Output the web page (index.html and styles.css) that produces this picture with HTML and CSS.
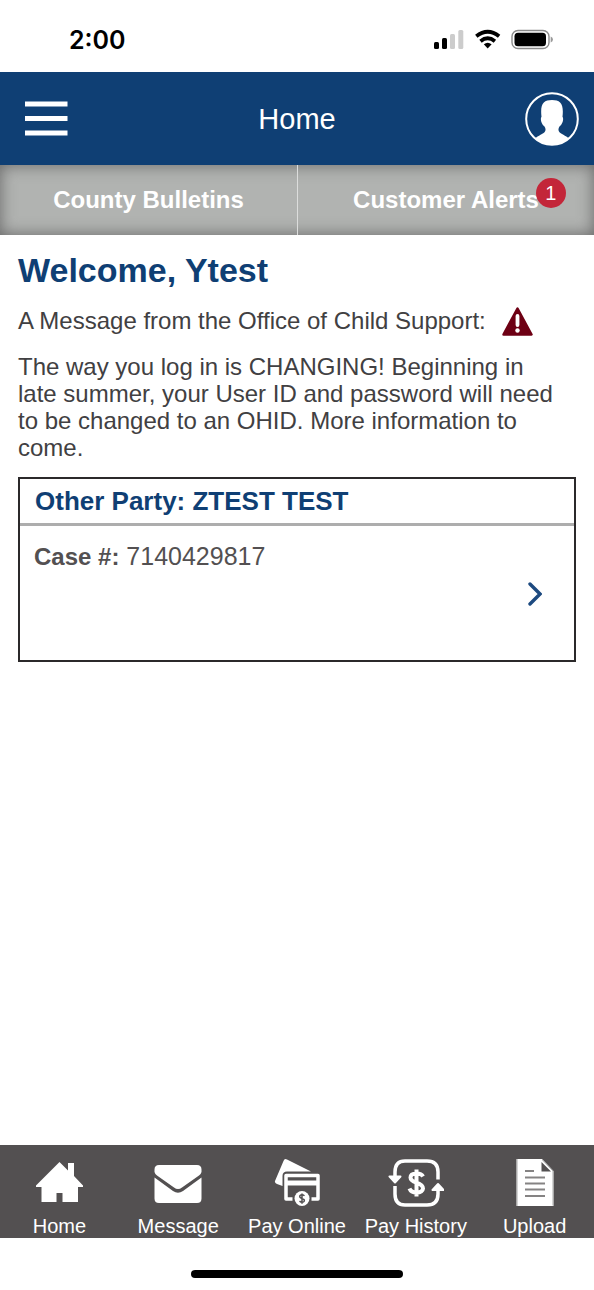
FILE: index.html
```html
<!DOCTYPE html>
<html lang="en">
<head>
<meta charset="utf-8">
<meta name="viewport" content="width=device-width, initial-scale=1">
<title>Home</title>
<link rel="stylesheet" href="styles.css">
</head>
<body>
<div class="status">
  <span class="clock">2:00</span>
  <svg class="status-icons" width="120" height="22" viewBox="0 0 120 22" aria-hidden="true">
    <g><rect x="1" y="13" width="5" height="7" rx="1.5"/><rect x="9" y="9" width="5" height="11" rx="1.5"/></g>
    <g fill="#ccc"><rect x="17" y="5" width="5" height="15" rx="1.5"/><rect x="25.300" y="1" width="5" height="19" rx="1.500"/></g>
    <g fill="none" stroke="#000" stroke-width="3.800"><path d="M43.300 7.300Q54.700-1.800 66.100 7.300"/><path d="M47.500 12.200Q54.700 6.300 61.900 12.200"/></g>
    <path d="M50.800 15.300Q54.700 12 58.600 15.300L54.700 19.500Z"/>
    <rect x="79" y="1.500" width="37" height="18" rx="6" fill="none" stroke="#8a8a8a" stroke-width="1.400"/>
    <rect x="81.500" y="3.800" width="31.500" height="13.500" rx="3.500"/>
    <path d="M117.700 7.600Q120 8.600 120 10.500T117.700 13.400Z" fill="#999"/>
  </svg>
</div>
<header class="header">
  <button class="icon-button" aria-label="Menu">
    <svg width="43" height="35" viewBox="0 0 43 35" fill="#fff"><path d="M0 .5h42.500v5H0zM0 15h42.500v5H0zM0 29.500h42.500v5H0z"/></svg>
  </button>
  <h1 class="title">Home</h1>
  <button class="icon-button" aria-label="Profile">
    <svg width="54" height="54" viewBox="0 0 54 54"><circle cx="27" cy="27" r="25.800" fill="none" stroke="#fff" stroke-width="2"/><path fill="#fff" d="M10 46.500C13 43.500 18.500 42 20 39.500 21 38 20.500 36 19.500 34.500 16.800 33 14.800 27 16.500 24.800 15 12 18.500 8 27 8S39 12 37.500 24.800C39.200 27 37.200 33 34.500 34.500 33.500 36 33 38 34 39.500 35.500 42 41 43.500 44 46.500A26 26 0 0 1 10 46.500Z"/></svg>
  </button>
</header>
<nav class="tabs" aria-label="Notices">
  <a class="tab" href="#bulletins">County Bulletins</a>
  <a class="tab" href="#alerts"><span class="tab-label">Customer Alerts<span class="badge">1</span></span></a>
</nav>
<main class="main">
  <h2 class="welcome">Welcome, Ytest</h2>
  <p class="notice">A Message from the Office of Child Support:
    <svg width="31" height="29" viewBox="0 0 31 29" aria-hidden="true"><path d="M15.500 1.500 29.500 27.500H1.500Z" fill="#6e0014" stroke="#6e0014" stroke-width="2.500" stroke-linejoin="round"/><path d="M15.500 9v9" stroke="#fff" stroke-width="3.800" stroke-linecap="round"/><circle cx="15.500" cy="23.500" r="2.200" fill="#fff"/></svg>
  </p>
  <p class="message">The way you log in is CHANGING! Beginning in late summer, your User ID and password will need to be changed to an OHID. More information to come.</p>
  <section class="case">
    <h3 class="case-title">Other Party: ZTEST TEST</h3>
    <div class="case-body">
      <p class="case-number"><strong class="case-label">Case #:</strong> 7140429817</p>
      <a class="case-link" href="#case" aria-label="Open case"><svg width="14" height="24" viewBox="0 0 14 24" fill="none" stroke="#1d4a80" stroke-width="3.400" stroke-linecap="round"><path d="M2 2 12 12 2 22"/></svg></a>
    </div>
  </section>
</main>
<nav class="bottom-nav" aria-label="Main">
  <a class="nav-item" href="#home">
    <svg width="56" height="48" viewBox="0 0 56 48" fill="#fff"><path d="M28.500 3 37 11.500V4H43V17L52 26.500V28H47V43H31.500V34H25.500V43H10.500V28H5V26.500Z"/></svg>Home</a>
  <a class="nav-item" href="#message">
    <svg width="56" height="48" viewBox="0 0 56 48" fill="#fff"><path d="M9 6H47Q51.500 6 51.500 10.500V13Q51 15 49 16.500L32 28.500Q28 31.500 24 28.500L7 16.500Q5 15 4.500 13V10.500Q4.500 6 9 6Z"/><path d="M4.500 18.500 23 32Q28 35.500 33 32L51.500 18.500V39.500Q51.500 44 47 44H9Q4.500 44 4.500 39.500Z"/></svg>Message</a>
  <a class="nav-item" href="#pay">
    <svg width="56" height="48" viewBox="0 0 56 48"><path d="M6 22 14.500 2Q15.500-1 18 .5L42 12.500H18Q13.500 12.500 13.500 17V27L8 25Q5.500 24 6 22Z" fill="#fff"/><path d="M23.500 40H17V16.500H49V40H42.500" fill="none" stroke="#fff" stroke-width="3.500" stroke-linejoin="round"/><path d="M17 21.500h32v5H17z" fill="#fff"/><circle cx="33" cy="39.500" r="7.500" fill="#fff"/><path d="M35.500 36.800Q33 34.700 31 36.500 30 38.500 33 39.500 36.300 40.500 35 42.500 33 44.200 30.500 42.200M33 34.500V44.800" fill="none" stroke="#535051" stroke-width="1.500"/></svg>Pay Online</a>
  <a class="nav-item" href="#history">
    <svg width="56" height="48" viewBox="0 0 56 48" fill="none" stroke="#fff" stroke-width="3.500"><path d="M7 20V13Q7 2 17 2H39Q50 2 50 13V20.500M7 27V35Q7 46 17 46H39Q50 46 50 35V29"/><path d="M35 17.500Q33.500 14.500 28.500 14.500 22.500 14.500 22.500 18.500 22.500 21.500 28.500 23.700 35 26 35 29.500 34.500 33.500 28.500 33.500 23 33.500 21.500 29.500M28.500 10.500V37.500" stroke-width="4"/><path d="M1.500 17.500H12.500L7 23.500ZM44.500 31H55.500L50 25Z" fill="#fff" stroke-width="2" stroke-linejoin="round"/></svg>Pay History</a>
  <a class="nav-item" href="#upload">
    <svg width="56" height="48" viewBox="0 0 56 48"><path d="M9.500 0H35L46.500 12V47H9.500Z" fill="#fff"/><path d="M34.500 3V12.500H44Z" fill="#535051"/><path d="M35.500 1 46 12V46.500M10 0V47" fill="none" stroke="#aaa"/><path d="M18 12h9M18 18.500h20M18 24.500h20M18 30.500h20M18 37h20" stroke="#858383" stroke-width="2.200"/></svg>Upload</a>
</nav>
<div class="indicator-area"><div class="indicator"></div></div>
</body>
</html>
```
FILE: styles.css
```css
* { box-sizing: border-box; }
body {
  margin: 0;
  min-height: 100vh;
  display: flex;
  flex-direction: column;
  background: #fff;
  color: #414042;
  font-family: "Liberation Sans", Arial, sans-serif;
}
h1, h2, h3, p { margin: 0; }
a { color: inherit; text-decoration: none; }
svg { display: block; }

.status {
  height: 72px;
  padding: 8px 41px 0 69px;
  display: flex;
  align-items: center;
  justify-content: space-between;
}
.clock {
  color: #000;
  font: 600 25px Inter, sans-serif;
}
.header {
  height: 93px;
  padding: 0 15px 0 25px;
  display: grid;
  grid-template-columns: 54px 1fr 54px;
  align-items: center;
  background: #0f3f74;
  color: #fff;
}
.title {
  padding: 2px 10px 0 0;
  font-size: 29px;
  font-weight: 400;
  text-align: center;
}
.icon-button {
  padding: 0;
  border: 0;
  background: none;
}
.tabs {
  height: 70px;
  display: grid;
  grid-template-columns: 1fr 1fr;
  background: #b1b3b1;
  box-shadow: inset 0 0 16px #666;
  color: #fff;
  font-size: 24px;
  font-weight: 700;
}
.tab {
  display: flex;
  align-items: center;
  justify-content: center;
}
.tab + .tab { border-left: 1px solid #dcdddc; }
.tab-label { position: relative; }
.badge {
  position: absolute;
  top: -8px;
  right: -27px;
  width: 30px;
  height: 30px;
  border-radius: 50%;
  background: #c32639;
  font-size: 20px;
  font-weight: 400;
  line-height: 30px;
  text-align: center;
}
.main {
  flex: 1;
  padding: 16px 18px;
}
.welcome {
  color: #0f3f74;
  font-size: 34px;
  line-height: 38px;
}
.notice {
  margin-top: 16px;
  display: flex;
  align-items: center;
  gap: 16px;
  font-size: 24px;
  line-height: 32px;
}
.message {
  margin-top: 16px;
  padding-right: 12px;
  font-size: 24px;
  line-height: 27px;
}
.case {
  margin-top: 16px;
  border: 2px solid #2b292a;
}
.case-title {
  padding: 6px 15px;
  border-bottom: 3px solid #adadad;
  color: #0f3f74;
  font-size: 26px;
  line-height: 32px;
}
.case-body {
  padding: 15px 32px 54px 14px;
  color: #535051;
}
.case-number {
  font-size: 25px;
  line-height: 30px;
}
.case-label { font-size: 24px; }
.case-link {
  display: flex;
  justify-content: flex-end;
  padding-top: 10px;
}
.bottom-nav {
  height: 93px;
  padding-top: 14px;
  display: grid;
  grid-template-columns: repeat(5, 1fr);
  background: #535051;
  color: #fff;
  font-size: 20px;
  line-height: 24px;
}
.nav-item {
  display: flex;
  flex-direction: column;
  align-items: center;
  gap: 7px;
  white-space: nowrap;
}
.indicator-area {
  height: 52px;
  padding-top: 32px;
}
.indicator {
  width: 212px;
  height: 8px;
  margin: 0 auto;
  border-radius: 4px;
  background: #000;
}
```
